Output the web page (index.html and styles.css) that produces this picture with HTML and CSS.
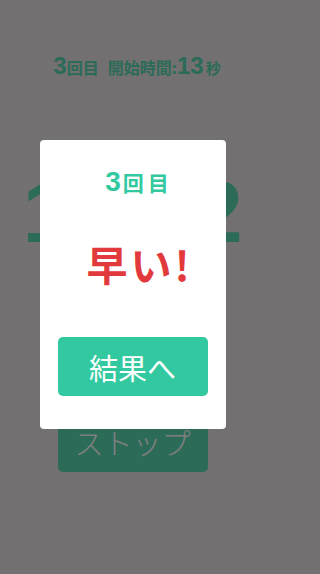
FILE: index.html
```html
<!DOCTYPE html>
<html lang="ja">
<head>
<meta charset="utf-8">
<title>ストップウォッチ</title>
<link rel="stylesheet" href="styles.css">
</head>
<body>
<main class="game">
  <div class="status">
    <span class="num">3</span><span class="jp">回目</span><span class="jp gap">開始時間:</span><span class="num">13</span><span class="jp sec">秒</span>
  </div>
  <div class="timer">12.02</div>
  <button class="stop-btn">ストップ</button>
</main>
<div class="overlay">
  <div class="modal">
    <div class="modal-title"><span class="num">3</span><span class="jp">回目</span></div>
    <div class="modal-result"><span class="first">早</span>い<span class="bang">!</span></div>
    <button class="result-btn">結果へ</button>
  </div>
</div>
</body>
</html>
```
FILE: styles.css
```css
html {
  background: #737071;
}
html, body {
  margin: 0;
  padding: 0;
}
body {
  width: 265px;
  height: 574px;
  background: #e6e0e2;
  font-family: "Liberation Sans", "Noto Sans CJK JP", sans-serif;
  overflow: hidden;
  position: relative;
}
.game {
  display: flex;
  flex-direction: column;
  align-items: center;
  padding-top: 51px;
}
.status {
  height: 30px;
  line-height: 30px;
  font-size: 24px;
  font-weight: bold;
  color: #56d6b0;
  white-space: nowrap;
  padding-left: 9px;
}
.status .num {
  font-family: "Liberation Sans", sans-serif;
  font-size: 24px;
}
.jp {
  font-family: "Noto Sans CJK JP", sans-serif;
  font-weight: bold;
}
.status .jp {
  font-size: 16px;
}
.status .gap {
  margin-left: 9px;
}
.status .sec {
  font-size: 15px;
  margin-left: 2px;
}
.timer {
  margin-top: 87px;
  height: 88px;
  line-height: 88px;
  font-family: "Liberation Sans", sans-serif;
  font-weight: bold;
  font-size: 88px;
  color: #56d6b0;
  white-space: nowrap;
}
.stop-btn {
  margin-top: 155px;
  width: 150px;
  height: 61px;
  border: none;
  border-radius: 5px;
  background: #56d6b0;
  color: #ffffff;
  font-family: "Noto Sans CJK JP", sans-serif;
  font-size: 29px;
  font-weight: 300;
  padding: 0;
}
.overlay {
  position: absolute;
  inset: 0;
  background: rgba(0, 0, 0, 0.5);
  display: flex;
  justify-content: center;
  align-items: flex-start;
  padding-top: 140px;
  box-sizing: border-box;
}
.modal {
  width: 186px;
  height: 289px;
  background: #ffffff;
  border-radius: 4px;
  display: flex;
  flex-direction: column;
  align-items: center;
  padding-top: 27px;
  box-sizing: border-box;
}
.modal-title {
  height: 30px;
  line-height: 30px;
  font-size: 28px;
  font-weight: bold;
  color: #33c9a0;
  white-space: nowrap;
  padding-left: 13px;
}
.modal-title .num {
  font-family: "Liberation Sans", sans-serif;
}
.modal-title .jp {
  font-size: 21px;
  letter-spacing: 4px;
  margin-left: 2px;
}
.modal-result {
  margin-top: 42px;
  height: 48px;
  line-height: 48px;
  font-family: "Noto Sans CJK JP", sans-serif;
  font-weight: bold;
  font-size: 41px;
  color: #e2393d;
  white-space: nowrap;
  padding-left: 11px;
}
.modal-result .first {
  margin-right: 3px;
}
.modal-result .bang {
  margin-left: 3px;
}
.result-btn {
  margin-top: 50px;
  width: 150px;
  height: 59px;
  border: none;
  border-radius: 5px;
  background: #33c9a0;
  color: #ffffff;
  font-family: "Noto Sans CJK JP", sans-serif;
  font-size: 29px;
  font-weight: 400;
  padding: 0;
}
```
